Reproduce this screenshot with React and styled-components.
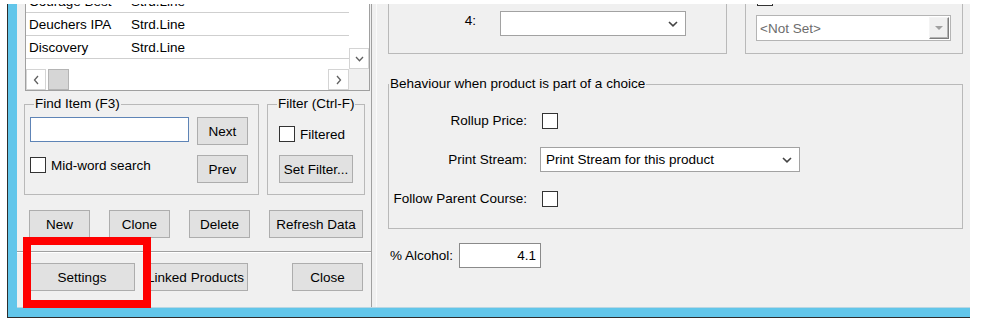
import React from "react";
import styled, { createGlobalStyle } from "styled-components";

const GlobalStyle = createGlobalStyle`
  html, body { margin: 0; padding: 0; background: #fff; }
  body {
    font-family: "Liberation Sans", Arial, sans-serif;
    font-size: 13.5px;
    color: #000;
  }
  * { box-sizing: border-box; }
`;

const Stage = styled.div`
  position: relative;
  width: 981px;
  height: 324px;
  padding-top: 4px;
  overflow: hidden;
  background: #fff;
`;

const Frame = styled.div`
  margin-left: 7px;
  width: 963px;
  height: 314px;
  background: #62c6ea;
  border-left: 1px solid #2d2d2d;
  border-bottom: 1px solid #2d2d2d;
  padding: 0 0 9px 9px;
`;

const Client = styled.div`
  display: flex;
  height: 100%;
  background: #f0f0f0;
  border-bottom: 1px solid #b9d7e3;
`;

/* ---------- left panel ---------- */
const LeftPanel = styled.div`
  width: 355px;
  flex: none;
  display: flex;
  flex-direction: column;
  border-right: 1px solid #a0a0a0;
`;

const Splitter = styled.div`
  width: 5px;
  flex: none;
  border-right: 1px solid #fafafa;
`;

const ListBox = styled.div`
  margin-left: 8px;
  width: 345px;
  height: 87px;
  flex: none;
  background: #fff;
  border: 1px solid #a0a0a0;
  border-top: none;
  display: grid;
  grid-template-columns: 1fr 20px;
  grid-template-rows: 65px 21px;
`;

const Viewport = styled.div`
  overflow: hidden;
`;

const Rows = styled.div`
  margin-top: -14px;
`;

const Row = styled.div`
  height: 23px;
  display: grid;
  grid-template-columns: 102px 1fr;
  align-items: center;
  padding-left: 3px;
  border-bottom: 1px solid #cfcfcf;
  white-space: nowrap;
`;

const VScroll = styled.div`
  display: flex;
  flex-direction: column;
  justify-content: flex-end;
  background: #fff;
`;

const HScroll = styled.div`
  display: flex;
  align-items: stretch;
  background: #fff;
`;

const ScrollBtn = styled.div`
  width: ${(p) => p.$w}px;
  height: ${(p) => p.$h}px;
  flex: none;
  display: flex;
  align-items: center;
  justify-content: center;
  border: 1px solid #d4d4d4;
  background: #fff;
`;

const Thumb = styled.div`
  width: 21px;
  margin-left: 2px;
  background: #d6d6d6;
  border: 1px solid #b4b4b4;
`;

const Track = styled.div`
  flex: 1;
`;

const Corner = styled.div`
  background: #f0f0f0;
`;

const FindRow = styled.div`
  display: flex;
  gap: 8px;
  margin-top: 6px;
  padding-left: 7px;
`;

const Group = styled.fieldset`
  margin: 0;
  padding: 0;
  min-width: 0;
  border: 1px solid #b9b9b9;
  width: ${(p) => p.$w}px;
  height: ${(p) => p.$h}px;
  flex: none;
`;

const Legend = styled.legend`
  padding: 0 1px;
  margin-left: ${(p) => p.$offset}px;
  line-height: 14px;
  font-size: 13.5px;
  white-space: nowrap;
`;

const FindBody = styled.div`
  display: flex;
  gap: 8px;
  padding: 6px 0 0 5px;
`;

const Column = styled.div`
  display: flex;
  flex-direction: column;
  gap: ${(p) => p.$gap || 0}px;
  width: ${(p) => (p.$w ? `${p.$w}px` : "auto")};
`;

const TextBox = styled.div`
  width: ${(p) => p.$w}px;
  height: 25px;
  background: #fff;
  border: 1px solid ${(p) => p.$border || "#7a7a7a"};
  display: flex;
  align-items: center;
  justify-content: ${(p) => (p.$right ? "flex-end" : "flex-start")};
  padding: 0 4px;
`;

const CheckRow = styled.label`
  display: flex;
  align-items: center;
  gap: 5px;
  margin-top: ${(p) => p.$mt || 0}px;
  white-space: nowrap;
`;

const Box = styled.span`
  width: 16px;
  height: 16px;
  flex: none;
  background: #fff;
  border: 1px solid #333;
  margin-left: ${(p) => p.$ml || 0}px;
  display: flex;
  align-items: center;
  justify-content: center;
`;

const Button = styled.button`
  width: ${(p) => p.$w}px;
  height: 28px;
  flex: none;
  margin: 0;
  margin-top: ${(p) => p.$mt || 0}px;
  padding: 0;
  font-family: inherit;
  font-size: 13.5px;
  color: #000;
  background: #e1e1e1;
  border: 1px solid #adadad;
  white-space: nowrap;
  overflow: hidden;
`;

const FilterBody = styled.div`
  display: flex;
  flex-direction: column;
  align-items: flex-start;
  padding: 15px 0 0 11px;
`;

const ActionRow = styled.div`
  display: flex;
  justify-content: space-between;
  margin-top: 15px;
  padding: 0 8px 0 12px;
`;

const Separator = styled.div`
  margin-top: 13px;
  height: 2px;
  border-top: 1px solid #a0a0a0;
  border-bottom: 1px solid #fff;
`;

const BottomRow = styled.div`
  display: flex;
  gap: 8px;
  margin-top: 10px;
  padding: 0 8px 0 12px;
  & > :last-child { margin-left: auto; }
`;

/* ---------- right panel ---------- */
const RightPanel = styled.div`
  flex: 1;
  display: flex;
  flex-direction: column;
  padding: 0 7px 0 11px;
`;

const TopRow = styled.div`
  display: flex;
  gap: 18px;
`;

const TopGroup = styled.div`
  width: ${(p) => p.$w}px;
  height: 50px;
  border: 1px solid #b9b9b9;
  border-top: none;
  overflow: hidden;
`;

const FieldLine = styled.div`
  display: flex;
  align-items: flex-start;
  padding-top: 7px;
`;

const RightLabel = styled.span`
  width: ${(p) => p.$w}px;
  text-align: right;
  line-height: 16px;
  margin-top: 2px;
  margin-right: ${(p) => p.$mr || 0}px;
`;

const Combo = styled.div`
  width: ${(p) => p.$w}px;
  height: 25px;
  background: #fff;
  border: 1px solid #a2a2a2;
  display: flex;
  align-items: center;
  justify-content: space-between;
  padding: 0 7px 0 5px;
  white-space: nowrap;
`;

const StackB = styled.div`
  display: flex;
  flex-direction: column;
  padding: 0 11px 0 10px;
  margin-top: -14px;
`;

const DisabledCombo = styled.div`
  margin-top: 9px;
  height: 26px;
  width: 195px;
  background: #fff;
  border: 1px solid #b4b4b4;
  display: flex;
  align-items: stretch;
  padding: 1px;
  color: #6d6d6d;
`;

const DisabledText = styled.span`
  flex: 1;
  display: flex;
  align-items: center;
  padding-left: 2px;
`;

const DropBtn = styled.span`
  width: 20px;
  background: #f0f0f0;
  border: 1px solid;
  border-color: #f4f4f4 #7d7d7d #7d7d7d #f4f4f4;
  box-shadow: inset -1px -1px 0 #b4b4b4;
  display: flex;
  align-items: center;
  justify-content: center;
`;

const FormGrid = styled.div`
  display: grid;
  grid-template-columns: 128px auto;
  grid-auto-rows: 25px;
  column-gap: 13px;
  row-gap: 14px;
  align-items: center;
  justify-items: start;
  padding: 17px 0 0 10px;
`;

const GridLabel = styled.span`
  justify-self: end;
  white-space: nowrap;
`;

const AlcoholRow = styled.div`
  display: flex;
  align-items: center;
  margin-top: 14px;
  padding-left: 2px;
`;

const AlcoholLabel = styled.span`
  width: 69px;
  white-space: nowrap;
`;

const Highlight = styled.div`
  position: absolute;
  left: 23px;
  top: 237px;
  width: 128px;
  height: 71px;
  border: 8px solid #ff0000;
  pointer-events: none;
`;

const ChevDown = ({ color = "#606060", w = 9, h = 6, sw = 1.3 }) => (
  <svg width={w} height={h} viewBox={`0 0 ${w} ${h}`}>
    <polyline points={`1,1 ${w / 2},${h - 1.2} ${w - 1},1`} fill="none" stroke={color} strokeWidth={sw} />
  </svg>
);

const ChevSide = ({ dir }) => (
  <svg width="6" height="10" viewBox="0 0 6 10">
    <polyline
      points={dir === "left" ? "5,1 1.5,5 5,9" : "1,1 4.5,5 1,9"}
      fill="none"
      stroke="#606060"
      strokeWidth="1.3"
    />
  </svg>
);

const Tri = () => (
  <svg width="8" height="4" viewBox="0 0 8 4">
    <polygon points="0,0 8,0 4,4" fill="#a0a0a0" />
  </svg>
);

const Tick = () => (
  <svg width="12" height="12" viewBox="0 0 12 12">
    <polyline points="2,6 5,9 10,2" fill="none" stroke="#333" strokeWidth="1.6" />
  </svg>
);

const rows = [
  ["Courage Best", "Strd.Line"],
  ["Deuchers IPA", "Strd.Line"],
  ["Discovery", "Strd.Line"],
  ["", ""],
];

export default function App() {
  return (
    <>
      <GlobalStyle />
      <Stage>
        <Frame>
          <Client>
            <LeftPanel>
              <ListBox>
                <Viewport>
                  <Rows>
                    {rows.map(([a, b], i) => (
                      <Row key={i}>
                        <span>{a}</span>
                        <span>{b}</span>
                      </Row>
                    ))}
                  </Rows>
                </Viewport>
                <VScroll>
                  <ScrollBtn $w={20} $h={21}>
                    <ChevDown />
                  </ScrollBtn>
                </VScroll>
                <HScroll>
                  <ScrollBtn $w={20} $h={21}>
                    <ChevSide dir="left" />
                  </ScrollBtn>
                  <Thumb />
                  <Track />
                  <ScrollBtn $w={21} $h={21}>
                    <ChevSide dir="right" />
                  </ScrollBtn>
                </HScroll>
                <Corner />
              </ListBox>

              <FindRow>
                <Group $w={235} $h={98}>
                  <Legend $offset={9}>Find Item (F3)</Legend>
                  <FindBody>
                    <Column $w={159}>
                      <TextBox $w={159} $border="#5e84b6" />
                      <CheckRow $mt={15}>
                        <Box />
                        Mid-word search
                      </CheckRow>
                    </Column>
                    <Column $gap={10}>
                      <Button $w={51}>Next</Button>
                      <Button $w={51}>Prev</Button>
                    </Column>
                  </FindBody>
                </Group>
                <Group $w={98} $h={98}>
                  <Legend $offset={9}>Filter (Ctrl-F)</Legend>
                  <FilterBody>
                    <CheckRow>
                      <Box />
                      Filtered
                    </CheckRow>
                    <Button $w={74} $mt={13}>Set Filter...</Button>
                  </FilterBody>
                </Group>
              </FindRow>

              <ActionRow>
                <Button $w={61}>New</Button>
                <Button $w={61}>Clone</Button>
                <Button $w={61}>Delete</Button>
                <Button $w={94}>Refresh Data</Button>
              </ActionRow>

              <Separator />

              <BottomRow>
                <Button $w={106}>Settings</Button>
                <Button $w={105}>Linked Products</Button>
                <Button $w={71}>Close</Button>
              </BottomRow>
            </LeftPanel>

            <Splitter />

            <RightPanel>
              <TopRow>
                <TopGroup $w={339}>
                  <FieldLine>
                    <RightLabel $w={87} $mr={24}>4:</RightLabel>
                    <Combo $w={186}>
                      <span />
                      <ChevDown color="#444" w={10} h={6} sw={1.6} />
                    </Combo>
                  </FieldLine>
                </TopGroup>
                <TopGroup $w={218}>
                  <StackB>
                    <CheckRow>
                      <Box $ml={1}>
                        <Tick />
                      </Box>
                      Is Gift Card
                    </CheckRow>
                    <DisabledCombo>
                      <DisabledText>&lt;Not Set&gt;</DisabledText>
                      <DropBtn>
                        <Tri />
                      </DropBtn>
                    </DisabledCombo>
                  </StackB>
                </TopGroup>
              </TopRow>

              <Group $w={575} $h={152} style={{ marginTop: 23 }}>
                <Legend $offset={0}>Behaviour when product is part of a choice</Legend>
                <FormGrid>
                  <GridLabel>Rollup Price:</GridLabel>
                  <Box $ml={2} />
                  <GridLabel>Print Stream:</GridLabel>
                  <Combo $w={260}>
                    <span>Print Stream for this product</span>
                    <ChevDown color="#444" w={10} h={6} sw={1.6} />
                  </Combo>
                  <GridLabel>Follow Parent Course:</GridLabel>
                  <Box $ml={2} />
                </FormGrid>
              </Group>

              <AlcoholRow>
                <AlcoholLabel>% Alcohol:</AlcoholLabel>
                <TextBox $w={82} $right $border="#8a8a8a">4.1</TextBox>
              </AlcoholRow>
            </RightPanel>
          </Client>
        </Frame>
        <Highlight />
      </Stage>
    </>
  );
}
